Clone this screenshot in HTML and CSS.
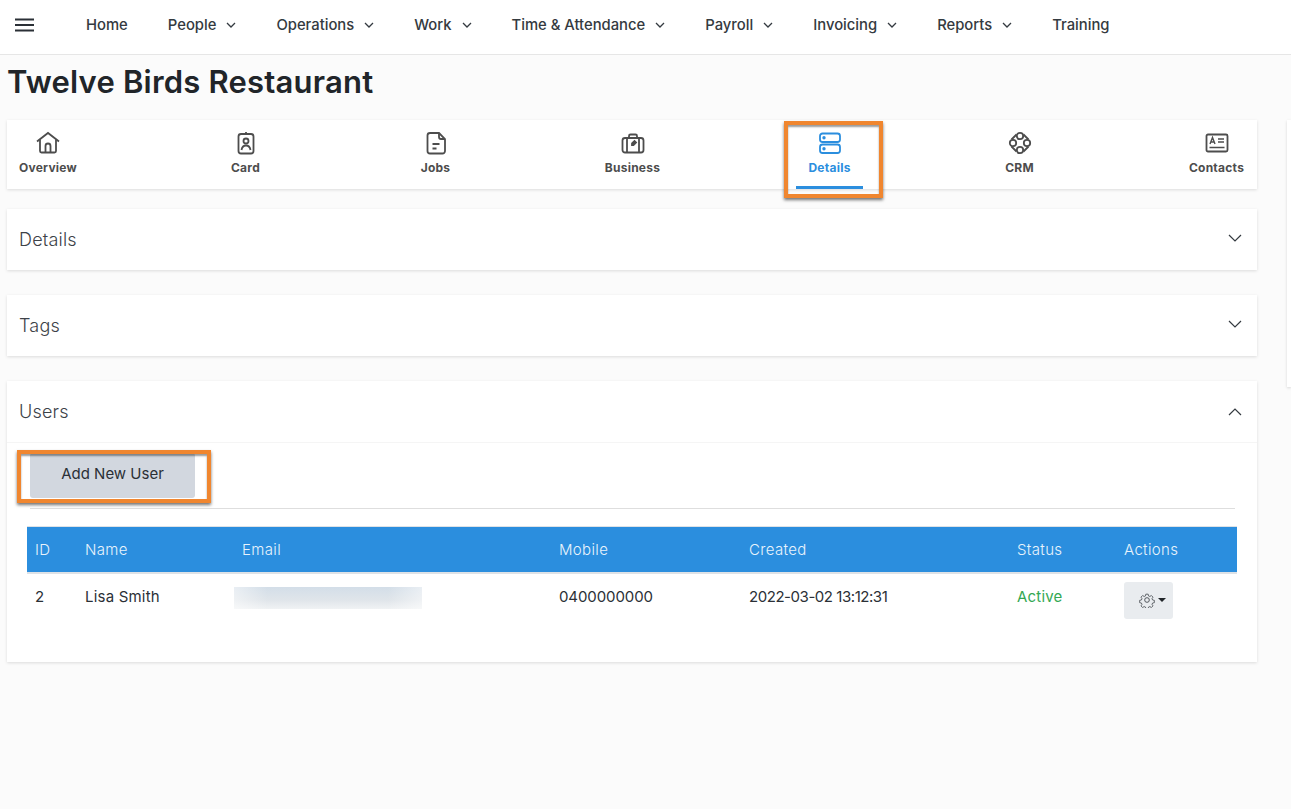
FILE: index.html
```html
<!DOCTYPE html>
<html lang="en">
<head>
  <meta charset="UTF-8" />
  <title>Twelve Birds Restaurant</title>
  <link rel="stylesheet" href="styles.css">
</head>
<body>

<nav class="topbar">
  <svg class="burger" width="19" height="14" viewBox="0 0 19 14"><path d="M0 1.500h19M0 7h19M0 12.500h19" stroke="#2b3036" stroke-width="2"/></svg>
  <ul class="menu">
    <li>Home</li>
    <li>People <svg class="chev" viewBox="0 0 10 6"><path d="M1 1l4 4 4-4"/></svg></li>
    <li>Operations <svg class="chev" viewBox="0 0 10 6"><path d="M1 1l4 4 4-4"/></svg></li>
    <li>Work <svg class="chev" viewBox="0 0 10 6"><path d="M1 1l4 4 4-4"/></svg></li>
    <li>Time &amp; Attendance <svg class="chev" viewBox="0 0 10 6"><path d="M1 1l4 4 4-4"/></svg></li>
    <li>Payroll <svg class="chev" viewBox="0 0 10 6"><path d="M1 1l4 4 4-4"/></svg></li>
    <li>Invoicing <svg class="chev" viewBox="0 0 10 6"><path d="M1 1l4 4 4-4"/></svg></li>
    <li>Reports <svg class="chev" viewBox="0 0 10 6"><path d="M1 1l4 4 4-4"/></svg></li>
    <li>Training</li>
  </ul>
</nav>

<h1 class="title">Twelve Birds Restaurant</h1>

<div class="layout">
  <main class="content">
    <div class="tabs">
      <div class="tab tab-overview">
        <svg class="tab-icon" viewBox="0 0 24 24"><path d="M1 10.500 12 2l11 8.500"/><path d="M4 8.500V20a1.500 1.500 0 0 0 1.500 1.500h13a1.500 1.500 0 0 0 1.500-1.500V8.500"/><path d="M9.500 21.500V15a2.500 2.500 0 0 1 5 0v6.500"/></svg>
        <span>Overview</span>
      </div>
      <div class="tab tab-card">
        <svg class="tab-icon" viewBox="0 0 24 24"><rect x="4.500" y="3" width="15" height="19.500" rx="2.500"/><path d="M12 1v2"/><circle cx="12" cy="10" r="2.500"/><path d="M7.500 19c.5-3 2-4.500 4.500-4.500s4 1.500 4.500 4.500"/></svg>
        <span>Card</span>
      </div>
      <div class="tab tab-jobs">
        <svg class="tab-icon" viewBox="0 0 24 24"><path d="M6 2h9l6 6v12a2.500 2.500 0 0 1-2.500 2.500h-12.500A2.500 2.500 0 0 1 3.500 20V4.500A2.500 2.500 0 0 1 6 2z"/><path d="M15 2v4a2 2 0 0 0 2 2h4"/><path d="M8.500 13h7M8.500 17.500h4"/></svg>
        <span>Jobs</span>
      </div>
      <div class="tab tab-business">
        <svg class="tab-icon" viewBox="0 0 24 24"><rect x="1.500" y="7" width="21" height="14.500" rx="2.500"/><path d="M8 7V5a1.500 1.500 0 0 1 1.500-1.500h5A1.500 1.500 0 0 1 16 5v2"/><path d="M6 7v14.500M18 7v14.500"/><path class="filled" d="M11 12.500l2.500-2.500 1.500 1.500-2.500 2.500h-1.500z"/></svg>
        <span>Business</span>
      </div>
      <div class="tab tab-details active">
        <svg class="tab-icon" viewBox="0 0 24 24"><rect x="2" y="2.500" width="20" height="8.500" rx="2.500"/><rect x="2" y="13.500" width="20" height="8.500" rx="2.500"/><circle class="filled" cx="6" cy="6.800" r=".8"/><circle class="filled" cx="6" cy="17.800" r=".8"/></svg>
        <span>Details</span>
        <i class="callout callout-tab"></i>
      </div>
      <div class="tab tab-crm">
        <svg class="tab-icon" viewBox="0 0 24 24"><path d="M8.500 3.500 3.500 8.500M15.500 3.500l5 5M3.500 15.500l5 5M20.500 15.500l-5 5"/><circle cx="12" cy="5" r="3.200"/><circle cx="5" cy="12" r="3.200"/><circle cx="19" cy="12" r="3.200"/><circle cx="12" cy="19" r="3.200"/></svg>
        <span>CRM</span>
      </div>
      <div class="tab tab-contacts">
        <svg class="tab-icon" viewBox="0 0 24 24"><rect x="1.500" y="3.500" width="21" height="17" rx="1.500"/><path class="thin" d="M5 13l2.500-6.500L10 13M6 11h3M13 8h6M13 11h6M4.500 16.500h15"/></svg>
        <span>Contacts</span>
      </div>
    </div>

    <section class="panel">
      <header class="panel-head">
        <h2>Details</h2>
        <svg class="panel-chev" viewBox="0 0 14 8"><path d="M1 1l6 6 6-6"/></svg>
      </header>
    </section>

    <section class="panel">
      <header class="panel-head">
        <h2>Tags</h2>
        <svg class="panel-chev" viewBox="0 0 14 8"><path d="M1 1l6 6 6-6"/></svg>
      </header>
    </section>

    <section class="panel panel-open">
      <header class="panel-head">
        <h2>Users</h2>
        <svg class="panel-chev" viewBox="0 0 14 8"><path d="M1 7l6-6 6 6"/></svg>
      </header>
      <div class="panel-body">
        <div class="toolbar">
          <button class="btn-add">Add New User</button>
          <i class="callout callout-btn"></i>
        </div>
        <table class="users">
          <thead>
            <tr>
              <th class="col-id">ID</th>
              <th class="col-name">Name</th>
              <th class="col-email">Email</th>
              <th class="col-mobile">Mobile</th>
              <th class="col-created">Created</th>
              <th class="col-status">Status</th>
              <th>Actions</th>
            </tr>
          </thead>
          <tbody>
            <tr>
              <td>2</td>
              <td>Lisa Smith</td>
              <td class="cell-blur"><div class="blur"></div></td>
              <td class="cell-mobile">0400000000</td>
              <td class="cell-date">2022-03-02 13:12:31</td>
              <td class="active-text">Active</td>
              <td>
                <button class="btn-gear">
                  <svg width="16" height="16" viewBox="0 0 24 24"><path d="M10 2h4l.6 3 2.300 1 2.600-1.700 2.800 2.800-1.700 2.600 1 2.300 3 .6v4l-3 .6-1 2.300 1.700 2.600-2.800 2.800-2.600-1.700-2.300 1-.6 3h-4l-.6-3-2.300-1-2.600 1.700-2.800-2.800 1.700-2.600-1-2.300-3-.6v-4l3-.6 1-2.300-1.700-2.600 2.800-2.800 2.600 1.700 2.300-1z" transform="translate(1.500 1.500) scale(.875)"/><circle cx="12" cy="12" r="3.500"/></svg>
                  <i class="caret"></i>
                </button>
              </td>
            </tr>
          </tbody>
        </table>
      </div>
    </section>
  </main>
  <aside class="side"></aside>
</div>

</body>
</html>
```

FILE: styles.css
```css
* {
  box-sizing: border-box;
}

html, body {
  height: 100%;
  overflow: hidden;
}

body {
  margin: 0;
  background: #fbfbfb;
  color: #212529;
  font-family: Inter, "Liberation Sans", sans-serif;
  font-size: 14px;
}

.topbar {
  display: flex;
  align-items: center;
  height: 55px;
  background: #fff;
  border-bottom: 1px solid #e6e6e6;
  padding: 0 0 5px 15px;
}

.burger {
  margin-right: 52px;
}

.menu {
  display: flex;
  gap: 40px;
  list-style: none;
  margin: 0;
  padding: 0;
  color: #343a40;
  font-size: 14.800px;
  font-weight: 500;
}

.menu li {
  display: flex;
  align-items: center;
  gap: 10px;
}

.chev {
  width: 10px;
  height: 6px;
  fill: none;
  stroke: #343a40;
  stroke-width: 1.300;
}

.title {
  margin: 0;
  padding: 8px 0 0 7px;
  height: 65px;
  font-size: 31px;
  font-weight: 600;
  line-height: 38px;
  letter-spacing: .2px;
}

.layout {
  display: flex;
  gap: 30px;
  padding-left: 7px;
}

.content {
  width: 1250px;
  flex: none;
}

.side {
  flex: 1;
  height: 267px;
  background: #fff;
  box-shadow: 0 1px 3px rgba(0,0,0,0.15);
}

.tabs {
  display: flex;
  justify-content: space-between;
  height: 69px;
  background: #fff;
  box-shadow: 0 1px 3px rgba(0,0,0,0.13);
}

.tab {
  position: relative;
  display: flex;
  flex-direction: column;
  align-items: center;
  padding-top: 11px;
  color: #4d4d4d;
  font-size: 12px;
  font-weight: 700;
  letter-spacing: .25px;
  white-space: nowrap;
}

.tab-overview { width: 82px; }
.tab-card { width: 53px; }
.tab-jobs { width: 67px; }
.tab-business { width: 67px; }
.tab-details { width: 67px; }
.tab-crm { width: 53px; }
.tab-contacts { width: 81px; }

.tab span {
  margin-top: 4px;
  line-height: 18px;
}

.tab-icon {
  width: 24px;
  height: 24px;
  fill: none;
  stroke: currentColor;
  stroke-width: 1.800;
}

.tab-icon .filled {
  fill: currentColor;
}

.tab-icon .thin {
  stroke-width: 1.400;
}

.tab.active {
  color: #2b8ede;
  border-bottom: 3px solid #2b8ede;
}

.callout {
  position: absolute;
  border: 4px solid #f0862f;
  box-shadow: 0 2px 3px rgba(0,0,0,0.55), inset 0 2px 2px rgba(0,0,0,0.4);
  pointer-events: none;
}

.callout-tab {
  left: -12px;
  right: -20px;
  top: 1px;
  bottom: -12px;
}

.callout-btn {
  left: -13px;
  top: 7px;
  width: 194px;
  height: 53px;
}

.panel {
  margin-top: 20px;
  background: #fff;
  box-shadow: 0 1px 3px rgba(0,0,0,0.13);
}

.panel + .panel {
  margin-top: 25px;
}

.panel-head {
  display: flex;
  justify-content: space-between;
  align-items: center;
  height: 61px;
  padding: 0 15px 0 12px;
}

.panel-head h2 {
  margin: 0;
  font-size: 18px;
  font-weight: 300;
  letter-spacing: .2px;
  color: #3d4248;
}

.panel-chev {
  width: 14px;
  height: 8px;
  margin-bottom: 3px;
  fill: none;
  stroke: #343a40;
  stroke-width: 1.200;
}

.panel-open .panel-head {
  height: 62px;
  border-bottom: 1px solid #f5f5f5;
}

.panel-open .panel-chev {
  margin-bottom: 0;
}

.panel-body {
  padding: 0 20px 43px;
}

.toolbar {
  position: relative;
  height: 66px;
  margin: 0 2px 17px 3px;
  padding-top: 10px;
  border-bottom: 1px solid #dedede;
}

.btn-add {
  display: block;
  width: 165px;
  height: 45px;
  padding: 0 0 4px;
  border: 0;
  border-radius: 3px;
  background: #d2d7df;
  color: #2b3036;
  font: 400 15px Inter, "Liberation Sans", sans-serif;
}

.users {
  width: 1210px;
  border-collapse: collapse;
  table-layout: fixed;
}

.users th {
  height: 46px;
  padding: 0 8px;
  background: #2b8ede;
  border-top: 1px solid #dee2e6;
  border-bottom: 2px solid #dee2e6;
  color: #e8f3fc;
  font-weight: 300;
  font-size: 15px;
  letter-spacing: .35px;
  text-align: left;
}

.users td {
  height: 46px;
  padding: 0 8px;
  color: #2b3036;
  font-size: 15px;
  font-weight: 400;
  letter-spacing: .2px;
  vertical-align: middle;
}

.col-id { width: 50px; }
.col-name { width: 157px; }
.col-email { width: 317px; }
.col-mobile { width: 190px; }
.col-created { width: 268px; }
.col-status { width: 107px; }

.users td.cell-blur {
  padding: 3px 0 0;
}

.blur {
  width: 188px;
  height: 22px;
  margin-top: 1px;
  background:
    linear-gradient(90deg, rgba(255,255,255,0.5), rgba(255,255,255,0) 18%, rgba(255,255,255,0) 82%, rgba(255,255,255,0.5)),
    linear-gradient(180deg, #d3dee8 0%, #e0e5ea 60%, #f0f2f4 100%);
}

.users td.cell-mobile {
  letter-spacing: -.1px;
}

.users td.cell-date {
  letter-spacing: -.45px;
}

.users td.active-text {
  color: #34a853;
}

.btn-gear {
  display: flex;
  align-items: center;
  gap: 3px;
  width: 49px;
  height: 37px;
  margin-top: 8px;
  padding: 0 0 0 15px;
  border: 0;
  border-radius: 3px;
  background: #e9ecef;
}

.btn-gear svg {
  fill: none;
  stroke: #3d4248;
  stroke-width: 1.300;
}

.caret {
  width: 0;
  height: 0;
  border-top: 4px solid #212529;
  border-left: 4px solid transparent;
  border-right: 4px solid transparent;
}
```
